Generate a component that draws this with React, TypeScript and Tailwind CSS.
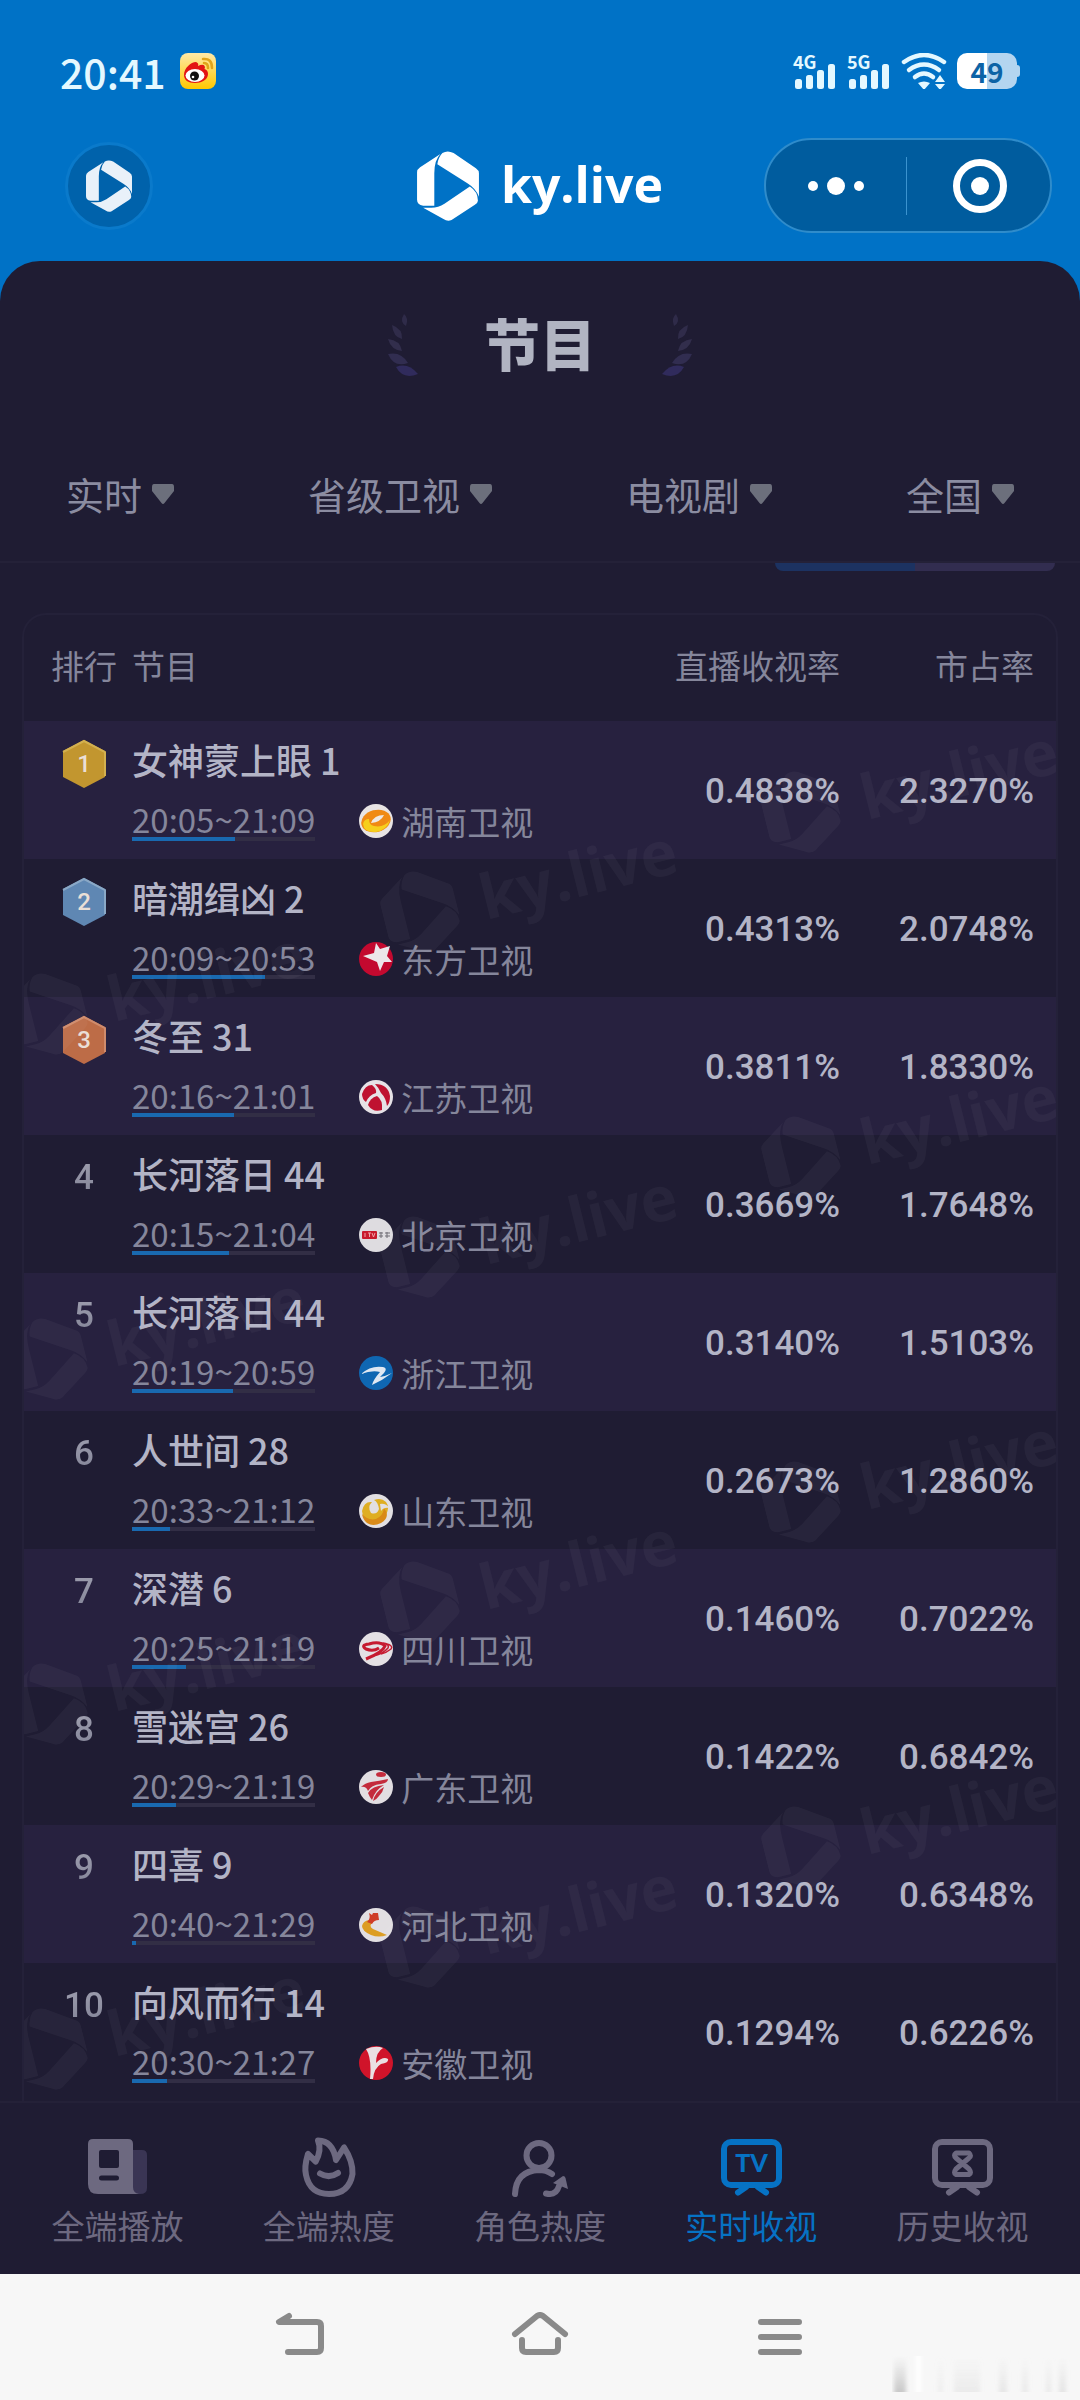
import { useState, type ReactNode } from "react";

type Programme = {
  rank: number;
  title: string;
  start: string;
  end: string;
  station: string;
  rating: string;
  share: string;
};

const NOW = "20:41";

const programmes: Programme[] = [
  { rank: 1, title: "女神蒙上眼 1", start: "20:05", end: "21:09", station: "湖南卫视", rating: "0.4838%", share: "2.3270%" },
  { rank: 2, title: "暗潮缉凶 2", start: "20:09", end: "20:53", station: "东方卫视", rating: "0.4313%", share: "2.0748%" },
  { rank: 3, title: "冬至 31", start: "20:16", end: "21:01", station: "江苏卫视", rating: "0.3811%", share: "1.8330%" },
  { rank: 4, title: "长河落日 44", start: "20:15", end: "21:04", station: "北京卫视", rating: "0.3669%", share: "1.7648%" },
  { rank: 5, title: "长河落日 44", start: "20:19", end: "20:59", station: "浙江卫视", rating: "0.3140%", share: "1.5103%" },
  { rank: 6, title: "人世间 28", start: "20:33", end: "21:12", station: "山东卫视", rating: "0.2673%", share: "1.2860%" },
  { rank: 7, title: "深潜 6", start: "20:25", end: "21:19", station: "四川卫视", rating: "0.1460%", share: "0.7022%" },
  { rank: 8, title: "雪迷宫 26", start: "20:29", end: "21:19", station: "广东卫视", rating: "0.1422%", share: "0.6842%" },
  { rank: 9, title: "四喜 9", start: "20:40", end: "21:29", station: "河北卫视", rating: "0.1320%", share: "0.6348%" },
  { rank: 10, title: "向风而行 14", start: "20:30", end: "21:27", station: "安徽卫视", rating: "0.1294%", share: "0.6226%" },
];

const filters = [
  { label: "时段", options: ["实时"] },
  { label: "频道", options: ["省级卫视"] },
  { label: "类型", options: ["电视剧"] },
  { label: "地区", options: ["全国"] },
];

function toMinutes(time: string) {
  const [h, m] = time.split(":").map(Number);
  return h * 60 + m;
}

function progress(start: string, end: string) {
  const from = toMinutes(start);
  return ((toMinutes(NOW) - from) / (toMinutes(end) - from)) * 100;
}

function Logo({ className }: { className: string }) {
  return (
    <svg viewBox="0 0 61 69" className={className} fill="currentColor" aria-hidden="true">
      <path d="M23 3 L3 16 Q0 18 0 21 V48 Q0 53 6 54 H17 V22 Q17 9 23 3Z" />
      <path d="M25 2 Q30 -1 36 2 L58 17 Q61 19 61 22 V45 Q58 37 50 32 L20 13 Q21 6 25 2Z" />
      <path d="M52 35 Q60 40 60 49 Q60 51 57 53 L34 68 Q30 70 26 67 L6 56 H14 Q21 56 27 52Z" />
    </svg>
  );
}

function Signal({ label }: { label: string }) {
  return (
    <div className="relative h-9 w-[44px]">
      <span className="absolute -top-1 left-0 text-lg leading-6 font-bold">{label}</span>
      <svg viewBox="0 0 44 36" className="h-9 w-[44px]" fill="currentColor" aria-hidden="true">
        <rect x="2" y="26" width="7" height="10" rx="2.5" />
        <rect x="13" y="22" width="7" height="14" rx="2.5" />
        <rect x="24" y="17" width="7" height="19" rx="2.5" />
        <rect x="35" y="11" width="7" height="25" rx="2.5" />
      </svg>
    </div>
  );
}

function StatusBar() {
  return (
    <div className="flex h-[104px] items-center px-[60px] pt-[38px] text-[#e4f8ff]">
      <span className="text-[41px] leading-[46px] font-medium">{NOW}</span>
      <svg viewBox="0 0 36 36" className="ml-3.5 size-9" aria-label="微博">
        <defs>
          <linearGradient id="weibo" x1="0" y1="0" x2="0" y2="1">
            <stop offset="0" stopColor="#ffe9a8" />
            <stop offset="1" stopColor="#ffc800" />
          </linearGradient>
        </defs>
        <rect width="36" height="36" rx="8" fill="url(#weibo)" />
        <path d="M4 22 C4 15 11 9 16 9 Q19 10 18 13 Q24 10 25 14 L24.500 16 Q28 17 28 21 C28 27 21 30 15 30 C8 30 4 27 4 22Z" fill="#e31414" />
        <ellipse cx="15" cy="22.500" rx="9.500" ry="6.500" fill="#fff" />
        <circle cx="14.500" cy="23" r="4.500" fill="#111" />
        <circle cx="13" cy="24" r="1.300" fill="#fff" />
        <path d="M24 10 Q28 10 28 15 M23 6 Q32 5 32 15" fill="none" stroke="#e0a31a" strokeWidth="2.500" strokeLinecap="round" />
      </svg>
      <div className="ml-auto flex items-center gap-[10px]">
        <Signal label="4G" />
        <Signal label="5G" />
        <svg viewBox="0 0 46 36" className="h-9 w-[46px]" aria-label="Wi-Fi">
          <g fill="none" stroke="currentColor" strokeWidth="4.500" strokeLinecap="round">
            <path d="M3 9 Q23 -5 43 9" />
            <path d="M8 17 Q23 6 38 17" />
            <path d="M14 24 Q23 17 32 24" />
          </g>
          <path d="M17 30 Q23 27 29 30 L23 37Z" fill="currentColor" />
          <path d="M34 29 L39 22 L44 29Z M34 31 H44 L39 37Z" fill="currentColor" />
        </svg>
        <div className="flex items-center">
          <div className="flex h-9 w-[60px] items-center justify-center rounded-[10px] bg-linear-to-r from-white from-50% to-[#b4d5f0] to-50% text-[28px] leading-8 font-bold text-[#0c63a6]">
            49
          </div>
          <div className="h-3 w-[3px] rounded-r bg-[#b4d5f0]" />
        </div>
      </div>
    </div>
  );
}

function TitleBar() {
  return (
    <header className="grid grid-cols-[1fr_auto_1fr] items-center px-7 pt-[34px] pb-7 text-white">
      <button
        type="button"
        aria-label="首页"
        className="ml-[37px] flex size-[88px] items-center justify-center rounded-full border-3 border-[#0a7acb] bg-[#0062ab] text-[#e9f1f9]"
      >
        <Logo className="h-[52px] w-[46px]" />
      </button>
      <div className="flex items-center gap-[22px]">
        <Logo className="h-[70px] w-[62px]" />
        <span className="pb-1 font-['Open_Sans',sans-serif] text-[50px] leading-[70px] font-bold">ky.live</span>
      </div>
      <div className="flex h-[95px] w-[288px] items-center justify-self-end rounded-full border-2 border-[#2f8ccb] bg-[#005c9e]">
        <button type="button" aria-label="更多" className="flex h-full flex-1 items-center justify-center gap-[9px]">
          <span className="size-[10px] rounded-full bg-white" />
          <span className="size-[18px] rounded-full bg-white" />
          <span className="size-[10px] rounded-full bg-white" />
        </button>
        <span className="h-[58px] w-px bg-[#3b93cf]" />
        <button type="button" aria-label="关闭" className="flex h-full flex-1 items-center justify-center pl-1">
          <span className="flex size-[54px] items-center justify-center rounded-full border-7 border-white">
            <span className="size-[18px] rounded-full bg-white" />
          </span>
        </button>
      </div>
    </header>
  );
}

function Laurel({ className }: { className: string }) {
  return (
    <svg viewBox="0 0 30 64" className={className} aria-hidden="true">
      <path d="M16 0 Q21 4 18 12 Q11 8 16 0Z" fill="#2f2b49" />
      <path d="M4 11 Q15 15 14 25 Q5 23 4 11Z" fill="#302c4a" />
      <path d="M0 25 Q12 26 14 37 Q3 36 0 25Z" fill="#322e4c" />
      <path d="M0 40 Q13 37 20 49 Q6 54 0 40Z" fill="#312d50" />
      <path d="M8 53 Q20 48 30 60 Q15 66 8 53Z" fill="#302b5c" />
    </svg>
  );
}

function FilterBar() {
  return (
    <div className="flex h-[132px] justify-between border-b-2 border-[#242138] px-[66px] pb-1">
      {filters.map((filter) => (
        <label key={filter.label} className="flex items-center gap-[10px]">
          <select
            aria-label={filter.label}
            className="field-sizing-content h-12 appearance-none bg-transparent text-[38px] leading-[48px] text-[#8b8ca1]"
          >
            {filter.options.map((option) => (
              <option key={option}>{option}</option>
            ))}
          </select>
          <svg viewBox="0 0 22 20" className="pointer-events-none h-5 w-[22px]" fill="#6c6f7c" aria-hidden="true">
            <path d="M2 0 H20 Q22 0 22 3 V7 L12.500 19 Q11 21 9.500 19 L0 7 V3 Q0 0 2 0Z" />
          </svg>
        </label>
      ))}
    </div>
  );
}

const medals: Record<number, { face: string; edge: string }> = {
  1: { face: "#c2962f", edge: "#d3b04f" },
  2: { face: "#5f87b3", edge: "#8aa8c6" },
  3: { face: "#bd6c47", edge: "#cf8b6c" },
};

function Rank({ rank }: { rank: number }) {
  const medal = medals[rank];
  if (!medal) {
    return (
      <span className="block bg-linear-to-b from-[#a2a2b2] to-[#7f8094] bg-clip-text font-['Roboto',sans-serif] text-[35px] leading-[50px] font-medium text-transparent">
        {rank}
      </span>
    );
  }
  return (
    <span className="relative flex h-[50px] items-center justify-center font-['Roboto',sans-serif] text-2xl font-medium text-[#eadfd6]">
      <svg viewBox="0 0 44 50" className="absolute h-[50px] w-11" aria-hidden="true">
        <path d="M22 1 L43 12 V38 L22 49 L1 38 V12Z" fill={medal.face} />
        <path d="M1 13 L22 2 L43 13 V37" fill="none" stroke={medal.edge} strokeWidth="2" />
      </svg>
      <span className="relative">{rank}</span>
    </span>
  );
}

const stationArt: Record<string, { disc: string; art: ReactNode }> = {
  湖南卫视: {
    disc: "#e8e4e4",
    art: (
      <>
        <ellipse cx="17" cy="17" rx="15" ry="11" fill="#f08a14" transform="rotate(-15 17 17)" />
        <path d="M4 20 Q5 29 17 28 Q28 26 31 16 Q25 24 15 22 Q10 21 10 15 Q5 15 4 20Z" fill="#f6cf1d" />
        <path d="M12 19 Q15 11 25 11 Q22 18 12 19Z" fill="#efe9e4" />
      </>
    ),
  },
  东方卫视: {
    disc: "#c3092f",
    art: <path d="M17 1 L21 7 L31 4 L28 14 L33 20 L25 20 L21 29 L18 20 L4 14 L15 11Z" fill="#ece6ea" />,
  },
  江苏卫视: {
    disc: "#e6e2e6",
    art: (
      <g fill="#bf1230">
        <path d="M3 14 Q6 5 13 5 Q18 9 17 13 Q10 15 7 22 Q3 19 3 14Z" />
        <path d="M16 4 Q29 4 31 16 Q31 23 28 26 Q27 18 22 13 Q20 8 16 4Z" />
        <path d="M9 25 Q11 18 18 16 Q24 20 23 30 Q14 33 9 25Z" />
      </g>
    ),
  },
  北京卫视: {
    disc: "#dedce0",
    art: (
      <>
        <rect x="3" y="13" width="15" height="8" rx="1" fill="#c91a2c" />
        <path d="M6 15 V19 M9 15 H12 M10.500 15 V19 M13 15 L14.500 19 L16 15" stroke="#eea3a8" fill="none" />
        <path d="M20 15 H24 M20 18 H24 M22 14 V20 M26 15 H31 M26 18 H31 M28 14 V20" stroke="#6f6d75" fill="none" />
      </>
    ),
  },
  浙江卫视: {
    disc: "#0f67b2",
    art: <path d="M2 18 Q12 9 24 11 Q29 12 25 17 L21 21 Q27 20 33 17 Q24 24 13 29 Q14 24 21 16 Q13 14 2 18Z" fill="#dfe8f2" />,
  },
  山东卫视: {
    disc: "#e2dfe2",
    art: (
      <>
        <path d="M3 17 Q5 7 13 8 Q8 13 12 19 Q18 21 20 15 Q19 8 15 6 Q22 3 27 8 Q31 13 27 21 Q22 30 13 30 Q4 28 3 17Z" fill="#dfae22" />
        <path d="M3 20 Q9 27 17 25 Q24 22 25 14 Q32 23 22 29 Q14 33 8 29 Q4 26 3 20Z" fill="#d98a18" />
        <path d="M21 10 Q27 9 30 14 Q25 13 22 17Z" fill="#e2dfe2" />
      </>
    ),
  },
  四川卫视: {
    disc: "#e4e0e4",
    art: (
      <g fill="none" stroke="#c61a30">
        <path d="M20 16 Q14 20 7 17 Q1 13 10 12 Q21 9 26 14 Q24 20 7 27" strokeWidth="3" />
        <path d="M22 11 Q31 12 29 16 Q24 22 14 24 M24 11 Q35 13 32 17 Q27 21 22 22" strokeWidth="1.500" />
      </g>
    ),
  },
  广东卫视: {
    disc: "#e2dee2",
    art: (
      <g fill="#c42b3c">
        <ellipse cx="22" cy="4.500" rx="5" ry="2.500" />
        <path d="M2 17 Q6 13 12 12 Q20 11 29 9 Q29 13 22 14 Q12 15 9 21 Q7 16 2 17Z" />
        <path d="M9 23 Q13 16 25 15 Q16 20 13 30 Q11 28 9 23Z" />
        <path d="M14 31 Q16 22 25 17 Q24 22 20 26 Q18 29 14 31Z" />
      </g>
    ),
  },
  河北卫视: {
    disc: "#e2dfe2",
    art: (
      <>
        <path d="M3 18 Q4 13 10 12 L14 14 Q9 18 14 21 L28 27 Q20 30 12 27 Q3 23 3 18Z" fill="#dc9d22" />
        <path d="M10 5 L13 7 L14 5 L19 5 L20 12 Q15 12 13 16 L8 14 Q12 11 10 5Z" fill="#cf3d28" />
      </>
    ),
  },
  安徽卫视: {
    disc: "#d0142a",
    art: <path d="M7 3 Q17 -1 24 2 Q17 6 17 17 Q24 10 29 13 Q30 17 22 18 Q15 22 14 33 L11 33 Q13 12 7 3Z" fill="#eadfe2" />,
  },
};

function StationIcon({ station }: { station: string }) {
  const { disc, art } = stationArt[station];
  return (
    <svg viewBox="0 0 34 34" className="size-[34px]" aria-hidden="true">
      <circle cx="17" cy="17" r="17" fill={disc} />
      {art}
    </svg>
  );
}

// Tilted brand marks, staggered over three columns and repeated down the card
const watermarks = Array.from({ length: 4 }).flatMap((_, i) => [
  { left: "73%", top: 164 + i * 345 },
  { left: "36%", top: 264 + i * 345 },
  { left: "0%", top: 366 + i * 345 },
]);

function Watermarks() {
  return (
    <div className="pointer-events-none absolute inset-0 overflow-hidden text-white/4" aria-hidden="true">
      {watermarks.map((mark) => (
        <div
          key={`${mark.left}-${mark.top}`}
          className="absolute flex origin-left -translate-x-3 -rotate-14 items-center gap-6"
          style={{ left: mark.left, top: mark.top }}
        >
          <Logo className="h-[84px] w-[75px]" />
          <span className="font-['Open_Sans',sans-serif] text-[62px] leading-[84px] font-bold">ky.live</span>
        </div>
      ))}
    </div>
  );
}

function RankingTable() {
  const figure = "pt-1 text-right align-middle font-['Roboto',sans-serif] text-[35px] leading-[48px] font-medium";
  return (
    <div className="relative mx-[22px] mt-[42px] overflow-hidden rounded-t-3xl border-2 border-b-0 border-[#242139]">
      <table className="w-full text-[#b3b4c6]">
        <thead>
          <tr className="h-[106px] text-[33px] text-[#85869b]">
            <th className="w-[108px] pb-1 pl-3 font-normal">排行</th>
            <th className="pb-1 text-left font-normal">节目</th>
            <th className="pb-1 text-right font-normal">直播收视率</th>
            <th className="w-[216px] pr-[22px] pb-1 text-right font-normal">市占率</th>
          </tr>
        </thead>
        <tbody>
          {programmes.map((item) => (
            <tr key={item.rank} className="h-[138px] odd:bg-[#27213f]">
              <td className="pt-[18px] pl-3 text-center align-top">
                <Rank rank={item.rank} />
              </td>
              <td className="pt-[18px] align-top">
                <p className="text-[36px] leading-10 font-medium">{item.title}</p>
                <div className="mt-[22px] flex items-end text-[33px] text-[#85869b]">
                  <div>
                    <p className="leading-9">
                      {item.start}~{item.end}
                    </p>
                    <div className="h-1 bg-[#322e45]">
                      <div className="h-full bg-[#1969b0]" style={{ width: `${progress(item.start, item.end)}%` }} />
                    </div>
                  </div>
                  <div className="ml-11 flex items-center gap-2 leading-10">
                    <StationIcon station={item.station} />
                    {item.station}
                  </div>
                </div>
              </td>
              <td className={figure}>{item.rating}</td>
              <td className={`${figure} pr-[22px]`}>{item.share}</td>
            </tr>
          ))}
        </tbody>
      </table>
      <Watermarks />
    </div>
  );
}

const tabs: { label: string; icon: ReactNode }[] = [
  {
    label: "全端播放",
    icon: (
      <>
        <path d="M40 13 H54 Q59 13 59 18 V51 Q59 57 52 57 H40Z" fill="#3a3554" />
        <path
          d="M5 2 H40 Q45 2 45 7 V50 Q45 56 51 57 H10 Q0 57 0 47 V7 Q0 2 5 2Z M13 13 Q11 13 11 15 V29 Q11 31 13 31 H29 Q31 31 31 29 V15 Q31 13 29 13Z M13.500 38.500 Q11 38.500 11 41 Q11 43.500 13.500 43.500 H28.500 Q31 43.500 31 41 Q31 38.500 28.500 38.500Z"
          fill="currentColor"
          fillRule="evenodd"
        />
      </>
    ),
  },
  {
    label: "全端热度",
    icon: (
      <g fill="none" stroke="currentColor" strokeWidth="6" strokeLinecap="round" strokeLinejoin="round">
        <path d="M16.700 24.500 L9 17 Q5 30 7 38 Q11 57 30 57 Q50 57 53.500 37 Q54 24 45 10.500 L37 23 Q34 4 19 3.500 Q23 13 16.700 24.500Z" />
        <path d="M21 36.500 Q30 42 39 36" />
      </g>
    ),
  },
  {
    label: "角色热度",
    icon: (
      <>
        <g fill="none" stroke="currentColor" strokeWidth="6" strokeLinecap="round">
          <circle cx="29" cy="18.500" r="12.500" />
          <path d="M5 57 Q6 34 29 33 Q36 33 42 37" />
          <path d="M36 56.500 Q46 59 49 49" />
        </g>
        <path d="M43 46 L53 39 Q55 39 55.500 41 L58 52Z" fill="currentColor" />
      </>
    ),
  },
  {
    label: "实时收视",
    icon: (
      <>
        <g fill="none" stroke="currentColor" strokeWidth="6" strokeLinecap="round">
          <rect x="3" y="5" width="55" height="43" rx="7" />
          <path d="M25 50 L17 55.500 M37 50 L45 55.500" />
        </g>
        <text x="30.500" y="35" textAnchor="middle" fontFamily="Lato, sans-serif" fontSize="25" fontWeight="900" fill="currentColor">
          TV
        </text>
      </>
    ),
  },
  {
    label: "历史收视",
    icon: (
      <g fill="none" stroke="currentColor" strokeWidth="6" strokeLinecap="round" strokeLinejoin="round">
        <rect x="3" y="5" width="55" height="43" rx="7" />
        <path d="M25 50 L17 55.500 M37 50 L45 55.500" />
        <path d="M24 16 H37 Q40 19 37 21 L24 32 Q21 36 24 37.500 H37 Q40 36 37 32 L24 21 Q21 18 24 16Z" strokeWidth="5" />
      </g>
    ),
  },
];

function TabBar() {
  const [active, setActive] = useState("实时收视");
  return (
    <nav className="grid flex-1 grid-cols-5 border-t-2 border-[#242138] px-3 pt-[34px] pb-7">
      {tabs.map((tab) => (
        <a
          key={tab.label}
          href="#"
          onClick={() => setActive(tab.label)}
          className={`flex flex-col items-center gap-2 text-[33px] leading-10 ${
            tab.label === active ? "text-[#0672c4]" : "text-[#6d6980]"
          }`}
        >
          <svg viewBox="0 0 60 60" className="size-[60px] overflow-visible" aria-hidden="true">
            {tab.icon}
          </svg>
          {tab.label}
        </a>
      ))}
    </nav>
  );
}

function SystemBar() {
  return (
    <div className="relative grid h-[126px] grid-cols-3 bg-[#f7f7f7] px-[180px]">
      <button type="button" aria-label="返回" className="flex items-center justify-center">
        <svg viewBox="0 0 60 50" className="h-[50px] w-[60px]" fill="none" stroke="#8a8a8a" strokeWidth="6" strokeLinecap="round" strokeLinejoin="round">
          <path d="M19 4 L9 10 H47 Q51 10 51 14 V36 Q51 40 47 40 H18" />
        </svg>
      </button>
      <button type="button" aria-label="主屏幕" className="flex items-center justify-center">
        <svg viewBox="0 0 60 50" className="h-[50px] w-[60px]" fill="none" stroke="#8a8a8a" strokeWidth="6" strokeLinecap="round" strokeLinejoin="round">
          <path d="M5 22 L27 4 Q30 2 33 4 L55 22" />
          <path d="M12 28 V36 Q12 40 16 40 H44 Q48 40 48 36 V28" />
        </svg>
      </button>
      <button type="button" aria-label="最近任务" className="flex items-center justify-center">
        <svg viewBox="0 0 60 50" className="h-[50px] w-[60px]" stroke="#8a8a8a" strokeWidth="6" strokeLinecap="round">
          <path d="M11 10 H49 M11 25 H49 M11 40 H49" />
        </svg>
      </button>
      <svg viewBox="0 0 180 36" className="absolute right-2 bottom-2 h-9 w-[180px]" aria-hidden="true">
        <defs>
          <linearGradient id="ghost" x1="0" y1="0" x2="0" y2="1">
            <stop offset="0" stopColor="#cfcfcf" stopOpacity="0" />
            <stop offset="1" stopColor="#c8c8c8" />
          </linearGradient>
          <filter id="soft">
            <feGaussianBlur stdDeviation="2 0" />
          </filter>
        </defs>
        <g filter="url(#soft)" fill="url(#ghost)">
          <rect x="2" width="12" height="36" />
          <rect x="24" width="5" height="36" fill="#fff" />
          <rect x="46" width="5" height="36" opacity=".2" />
          <rect x="62" width="26" height="36" opacity=".25" />
          <rect x="107" width="8" height="36" opacity=".35" />
          <rect x="130" width="6" height="36" opacity=".3" />
          <rect x="154" width="5" height="36" opacity=".3" />
          <rect x="167" width="7" height="36" opacity=".4" />
        </g>
      </svg>
    </div>
  );
}

export default function App() {
  return (
    <div className="flex min-h-screen flex-col bg-[#0072c6] font-['Noto_Sans_CJK_SC',sans-serif]">
      <StatusBar />
      <TitleBar />
      <main className="flex flex-1 flex-col rounded-t-[40px] bg-[#1f1c33]">
        <div className="flex h-[170px] items-center justify-center gap-[66px]">
          <Laurel className="h-16 w-[30px]" />
          <h1 className="pb-2 text-[56px] leading-[64px] font-black text-[#b1b4c2]">节目</h1>
          <Laurel className="h-16 w-[30px] -scale-x-100" />
        </div>
        <FilterBar />
        <div className="mr-[25px] ml-auto flex h-2 w-[280px] overflow-hidden rounded-b-2xl">
          <span className="flex-1 bg-[#1c3261]" />
          <span className="flex-1 bg-[#322d50]" />
        </div>
        <RankingTable />
        <TabBar />
      </main>
      <SystemBar />
    </div>
  );
}
